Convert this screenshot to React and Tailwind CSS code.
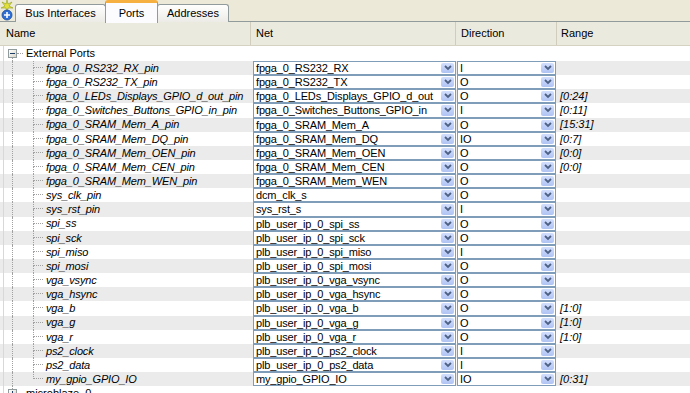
import React from 'react';

const ports = [
  ['fpga_0_RS232_RX_pin', 'fpga_0_RS232_RX', 'I', ''],
  ['fpga_0_RS232_TX_pin', 'fpga_0_RS232_TX', 'O', ''],
  ['fpga_0_LEDs_Displays_GPIO_d_out_pin', 'fpga_0_LEDs_Displays_GPIO_d_out', 'O', '[0:24]'],
  ['fpga_0_Switches_Buttons_GPIO_in_pin', 'fpga_0_Switches_Buttons_GPIO_in', 'I', '[0:11]'],
  ['fpga_0_SRAM_Mem_A_pin', 'fpga_0_SRAM_Mem_A', 'O', '[15:31]'],
  ['fpga_0_SRAM_Mem_DQ_pin', 'fpga_0_SRAM_Mem_DQ', 'IO', '[0:7]'],
  ['fpga_0_SRAM_Mem_OEN_pin', 'fpga_0_SRAM_Mem_OEN', 'O', '[0:0]'],
  ['fpga_0_SRAM_Mem_CEN_pin', 'fpga_0_SRAM_Mem_CEN', 'O', '[0:0]'],
  ['fpga_0_SRAM_Mem_WEN_pin', 'fpga_0_SRAM_Mem_WEN', 'O', ''],
  ['sys_clk_pin', 'dcm_clk_s', 'O', ''],
  ['sys_rst_pin', 'sys_rst_s', 'I', ''],
  ['spi_ss', 'plb_user_ip_0_spi_ss', 'O', ''],
  ['spi_sck', 'plb_user_ip_0_spi_sck', 'O', ''],
  ['spi_miso', 'plb_user_ip_0_spi_miso', 'I', ''],
  ['spi_mosi', 'plb_user_ip_0_spi_mosi', 'O', ''],
  ['vga_vsync', 'plb_user_ip_0_vga_vsync', 'O', ''],
  ['vga_hsync', 'plb_user_ip_0_vga_hsync', 'O', ''],
  ['vga_b', 'plb_user_ip_0_vga_b', 'O', '[1:0]'],
  ['vga_g', 'plb_user_ip_0_vga_g', 'O', '[1:0]'],
  ['vga_r', 'plb_user_ip_0_vga_r', 'O', '[1:0]'],
  ['ps2_clock', 'plb_user_ip_0_ps2_clock', 'I', ''],
  ['ps2_data', 'plb_user_ip_0_ps2_data', 'I', ''],
  ['my_gpio_GPIO_IO', 'my_gpio_GPIO_IO', 'IO', '[0:31]'],
];

const Chevron = () => (
  <svg width="8" height="6" viewBox="0 0 8 6">
    <path d="M1 1 L4 4 L7 1" stroke="#4d6185" strokeWidth="1.8" fill="none" />
  </svg>
);

const Combo = ({ value }) => (
  <div className="flex h-full items-stretch border border-[#7f9db9] bg-white">
    <span className="flex-1 overflow-hidden whitespace-nowrap pl-[2px] leading-[12px] tracking-[-0.15px]">{value}</span>
    <span className="m-px flex w-[13px] items-center justify-center rounded-[2px] bg-linear-to-b from-[#d2defd] to-[#b0c4f3]">
      <Chevron />
    </span>
  </div>
);

const ExpandBox = ({ minus }) => (
  <span className="flex h-[9px] w-[9px] shrink-0 items-center justify-center border border-[#919b9c] bg-linear-to-br from-white to-[#d8d5c8]">
    <span className="relative block h-px w-[5px] bg-[#1c3d64]">
      {!minus && <span className="absolute left-[2px] top-[-2px] block h-[5px] w-px bg-[#1c3d64]" />}
    </span>
  </span>
);

const Tab = ({ label, active, className }) =>
  active ? (
    <div className={`flex h-[23px] items-center justify-center rounded-t-[3px] border-x border-t-[3px] border-x-[#919b9c] border-t-[#f5b041] bg-[#fcfcfe] ${className}`}>
      {label}
    </div>
  ) : (
    <div className={`mt-[4px] flex h-[18px] items-center justify-center rounded-t-[3px] border-x border-t border-[#919b9c] bg-linear-to-b from-white to-[#ecebe6] ${className}`}>
      {label}
    </div>
  );

export default function App() {
  return (
    <div className="h-[393px] w-[690px] overflow-hidden bg-white font-['Liberation_Sans',Arial,sans-serif] text-[11px] text-black">
      {/* tab strip */}
      <div className="flex h-[22px] items-start border-b border-[#919b9c] bg-[#ece9d8]">
        <div className="w-[15px] shrink-0">
          <svg width="14" height="21" viewBox="0 0 14 21">
            <path d="M7 0 L8 4 L12 2 L9 6 L13 8 L8 8 L7 11 L6 8 L1 8 L5 6 L2 2 L6 4 Z" fill="#e4e03a" stroke="#8fa018" strokeWidth="0.6" />
            <circle cx="7" cy="15" r="5" fill="#2f6fd6" stroke="#1a4a9a" strokeWidth="0.8" />
            <path d="M7 12 V18 M4 15 H10" stroke="white" strokeWidth="1.6" />
          </svg>
        </div>
        <Tab label="Bus Interfaces" className="w-[91px]" />
        <Tab label="Ports" active className="z-10 -mx-px w-[53px]" />
        <Tab label="Addresses" className="w-[72px]" />
      </div>

      {/* header */}
      <div className="flex h-[24px] border-b border-[#d6d2c2] bg-[#ebeadf]">
        <div className="flex w-[251px] shrink-0 items-center border-r border-[#d0cdbd] pl-[6px]">Name</div>
        <div className="flex w-[205px] shrink-0 items-center border-r border-[#d0cdbd] pl-[5px]">Net</div>
        <div className="flex w-[101px] shrink-0 items-center border-r border-[#d0cdbd] pl-[5px]">Direction</div>
        <div className="flex flex-1 items-center pl-[4px]">Range</div>
      </div>

      {/* External Ports group */}
      <div className="flex h-[15px] items-center">
        <div className="h-full w-[4px] shrink-0 border-r border-[#d8d8d8]" />
        <div className="w-[4px] shrink-0" />
        <div className="flex h-full w-[9px] shrink-0 flex-col items-center">
          <div className="flex-1" />
          <ExpandBox minus />
          <div className="flex-1 border-l border-dotted border-[#a0a0a0]" />
        </div>
        <div className="w-[6px] shrink-0 border-t border-dotted border-[#a0a0a0]" />
        <span className="pl-[3px]">External Ports</span>
      </div>

      {ports.map(([name, net, dir, range], i) => {
        const last = i === ports.length - 1;
        return (
          <div key={name} className={`flex h-[14.15px] ${i % 2 === 0 ? 'bg-[#ebebeb]' : 'bg-white'}`}>
            <div className="flex h-full w-[251px] shrink-0 items-center">
              <div className="h-full w-[4px] shrink-0 border-r border-[#d8d8d8]" />
              <div className="h-full w-[9px] shrink-0 border-r border-dotted border-[#a0a0a0]" />
              <div className="h-full w-[20px] shrink-0" />
              <div className="flex h-full w-[10px] shrink-0 flex-col">
                <div className="h-[7px] border-b border-l border-dotted border-[#a0a0a0]" />
                <div className={`flex-1 border-dotted border-[#a0a0a0] ${last ? '' : 'border-l'}`} />
              </div>
              <span className="whitespace-nowrap pl-[3px] italic tracking-[-0.15px]">{name}</span>
            </div>
            <div className="h-full w-[205px] shrink-0 pl-[2px]">
              <Combo value={net} />
            </div>
            <div className="h-full w-[100px] shrink-0 pl-[1px]">
              <Combo value={dir} />
            </div>
            <div className="flex flex-1 items-center pl-[4px] italic">{range}</div>
          </div>
        );
      })}

      {/* next group, cut off by the window */}
      <div className="flex h-[15px] items-center">
        <div className="h-full w-[4px] shrink-0 border-r border-[#d8d8d8]" />
        <div className="w-[4px] shrink-0" />
        <div className="flex h-full w-[9px] shrink-0 flex-col items-center">
          <div className="flex-1 border-l border-dotted border-[#a0a0a0]" />
          <ExpandBox />
          <div className="flex-1" />
        </div>
        <div className="w-[6px] shrink-0 border-t border-dotted border-[#a0a0a0]" />
        <span className="pl-[3px]">microblaze_0</span>
      </div>
    </div>
  );
}
